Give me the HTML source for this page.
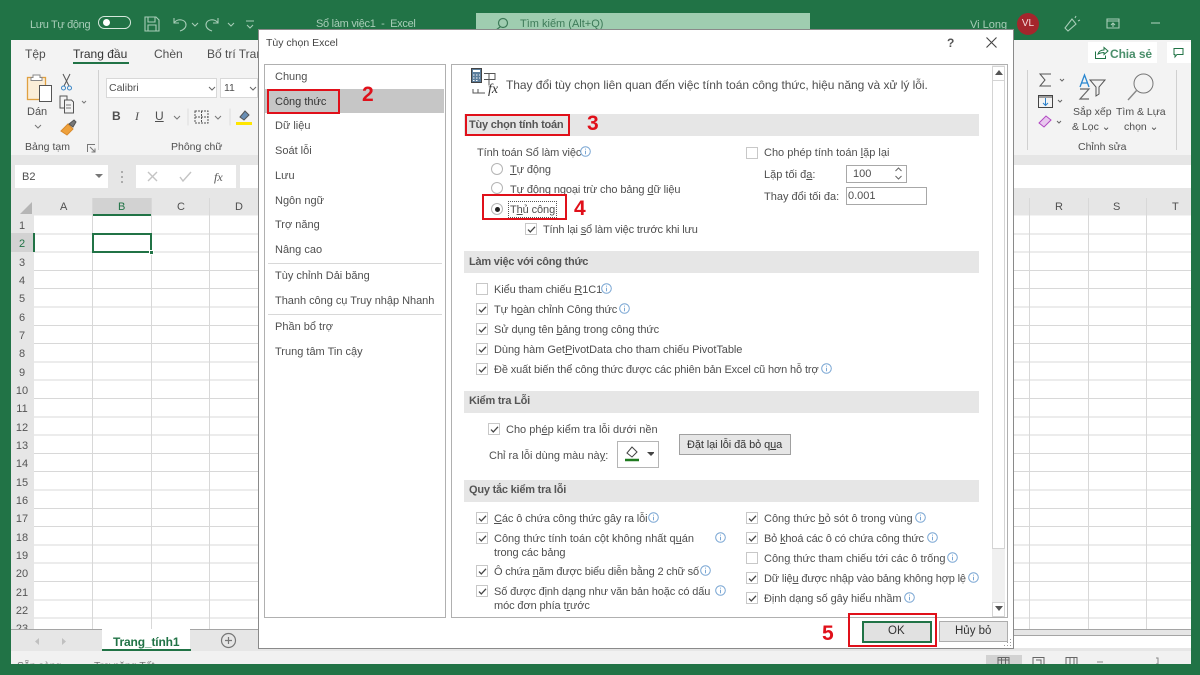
<!DOCTYPE html>
<html lang="vi"><head><meta charset="utf-8"><title>Tùy chọn Excel</title>
<style>
html,body{margin:0;padding:0;width:1200px;height:675px;overflow:hidden;background:#217346}
body{position:relative;font-family:"Liberation Sans","Noto Sans CJK SC",sans-serif;font-size:11px;color:#4f4f4f;filter:blur(.3px)}
div,span.t,svg.a{position:absolute}
.t{position:absolute;white-space:nowrap;line-height:14px;height:14px;margin-top:1px;letter-spacing:-.1px}
.n{font-size:11px;text-align:center;width:24px;left:10px;color:#555;margin-top:2px;letter-spacing:0}
.h{font-weight:bold;color:#555;left:469px;letter-spacing:-.22px}
.z{letter-spacing:0}
.sec{position:absolute;left:464px;width:515px;height:22px;background:#e6e6e6}
.cb{position:absolute;width:10px;height:10px;border:1px solid #c8c8c8;background:#fff}
.cb svg{position:absolute;left:.5px;top:.5px;width:9px;height:9px}
.info{position:absolute;width:11px;height:11px}
.rb{position:absolute;border:2px solid #e0101a}
.num{position:absolute;color:#e0101a;font-weight:bold;font-size:21px;line-height:24px}
.ra{position:absolute;width:10px;height:10px;border:1px solid #b5b5b5;border-radius:50%;background:#fff}
.sep{position:absolute;background:#d0d0d0}
u{text-underline-offset:1px}
</style></head><body>
<svg width="0" height="0" style="position:absolute"><defs>
<symbol id="ic" viewBox="0 0 11 11"><circle cx="5.5" cy="5.5" r="4.8" fill="none" stroke="#7ba7d4"/><path d="M5.5 2.600v1M5.500 4.800v3.400" stroke="#7ba7d4" fill="none"/></symbol>
<symbol id="ck" viewBox="0 0 9 9"><path d="M1 4.600l2.300 2.300L8 1.800" fill="none" stroke="#444" stroke-width="1.300"/></symbol>
</defs></svg>

<!-- title bar -->
<span class="t" style="left:30px;top:17px;color:#a8cdb8;letter-spacing:-.35px">Lưu Tự động</span>
<div style="left:98px;top:16px;width:31px;height:11px;border:1.5px solid #d5e8dc;border-radius:8px"></div>
<div style="left:103px;top:19px;width:7px;height:7px;border-radius:50%;background:#fff"></div>
<svg class="a" style="left:143px;top:15px" width="120" height="18" fill="none" stroke="#a8cdb8" stroke-width="1.100">
<path d="M2 2h11l3 3v11H2zM5 2v5h7V2M5 16v-6h8v6"/>
<path d="M31 3v5h5M31 8c3-5 12-4 12 2 0 3-3 5-6 6"/><path d="M49 8l3 3 3-3"/>
<path d="M75 3v5h-5M75 8c-3-5-12-4-12 2 0 3 3 5 6 6"/><path d="M85 8l3 3 3-3"/>
<path d="M103 6h8M104 10l3 3 3-3"/>
</svg>
<span class="t" style="left:316px;top:16px;color:#a8cdb8;letter-spacing:-.28px">Sổ làm việc1 &nbsp;-&nbsp; Excel</span>
<div style="left:476px;top:13px;width:334px;height:16px;background:#9fcdb0"></div>
<svg class="a" style="left:495px;top:17px" width="14" height="12" fill="none" stroke="#3d7a58" stroke-width="1.200"><circle cx="8" cy="6" r="4.500"/><path d="M5 10l-4 3"/></svg>
<span class="t z" style="left:520px;top:16px;color:#3d7a58">Tìm kiếm (Alt+Q)</span>
<span class="t z" style="left:970px;top:17px;color:#a8cdb8">Vi Long</span>
<div style="left:1017px;top:13px;width:22px;height:22px;border-radius:50%;background:#a4262c;color:#f5dcdc;font-size:10px;line-height:22px;text-align:center">VL</div>
<svg class="a" style="left:1063px;top:15px" width="135" height="18" fill="none" stroke="#a8cdb8" stroke-width="1.100"><path d="M2 13L9 4l4 5-8 7zM12 3l1-2M15 6l2-1"/><path d="M44 4h12v9H44zM44 6h12M50 12V8M48 10l2-2 2 2"/><path d="M88 8h9"/></svg>

<!-- Window -->
<div style="left:11px;top:40px;width:1180px;height:624px;background:#f3f3f3"></div>
<span class="t z" style="left:25px;top:46px;font-size:12px">Tệp</span>
<span class="t z" style="left:73px;top:46px;font-size:12px;color:#333">Trang đầu</span>
<div style="left:73px;top:62px;width:56px;height:2px;background:#217346"></div>
<span class="t z" style="left:154px;top:46px;font-size:12px">Chèn</span>
<span class="t z" style="left:207px;top:46px;font-size:12px">Bố trí Trang</span>

<!-- ribbon left -->
<svg class="a" style="left:24px;top:72px" width="32" height="32" fill="none"><rect x="3.500" y="5.500" width="18" height="22" fill="#fbeed8" stroke="#e0a040" stroke-width="1.300"/><path d="M9 5.500V3h7v2.500h2v3H7v-3z" fill="#fff" stroke="#888"/><rect x="15.500" y="13.500" width="12" height="16" fill="#fff" stroke="#555"/></svg>
<span class="t z" style="left:27px;top:104px">Dán</span>
<svg class="a" style="left:33px;top:123px" width="10" height="7" fill="none" stroke="#777"><path d="M2 2l3 3 3-3"/></svg>
<svg class="a" style="left:59px;top:72px" width="30" height="66" fill="none" stroke="#555"><path d="M4 2l6 12M11 2L5 14"/><circle cx="4.500" cy="16" r="2" stroke="#3a87c8"/><circle cx="10.500" cy="16" r="2" stroke="#3a87c8"/><path d="M1 24h7v12H1z"/><path d="M5.500 28h7l2 2v11h-9z" fill="#f3f3f3"/><path d="M7 33h5M7 36h5" stroke="#777"/><path d="M23 29l2 2 2-2" stroke="#777"/><path d="M2 59l7-7 5 5-6 6z" fill="#eea13c" stroke="#d98a2c"/><path d="M10 52l5-4 2 2-3 5z" fill="#777"/></svg>
<div class="sep" style="left:98px;top:70px;width:1px;height:80px"></div>
<span class="t z" style="left:25px;top:139px;font-size:10.500px">Bảng tạm</span>
<svg class="a" style="left:87px;top:144px" width="9" height="9" fill="none" stroke="#777"><path d="M.5 8V.5H8M3 3l5 5M8 4.500V8H4.500"/></svg>
<div style="left:106px;top:78px;width:111px;height:20px;background:#fff;border:1px solid #d8d8d8;box-sizing:border-box"></div>
<div style="left:220px;top:78px;width:38px;height:20px;background:#fff;border:1px solid #d8d8d8;box-sizing:border-box"></div>
<span class="t z" style="left:109px;top:80px;font-size:10.500px">Calibri</span>
<span class="t z" style="left:224px;top:80px;font-size:10.500px">11</span>
<svg class="a" style="left:208px;top:85px" width="50" height="8" fill="none" stroke="#666"><path d="M1 2l3 3 3-3M42 2l3 3 3-3"/></svg>
<span class="t z" style="left:112px;top:108px;font-weight:bold;font-size:12px">B</span>
<span class="t z" style="left:135px;top:108px;font-style:italic;font-size:12px;font-family:'Liberation Serif',serif">I</span>
<span class="t z" style="left:155px;top:108px;font-size:12px;text-decoration:underline">U</span>
<svg class="a" style="left:172px;top:108px" width="90" height="18" fill="none" stroke="#777"><path d="M2 8l3 3 3-3M43 8l3 3 3-3"/><path d="M16 .5v17" stroke="#ddd"/><path d="M23 3h13v12H23zM29.500 3v12M23 9h13" stroke-dasharray="2 1" stroke="#555"/><path d="M58 .5v17" stroke="#ddd"/><path d="M68 9l5-6 4 4-5 5z" fill="#6a8fb5" stroke="#555"/></svg>
<div style="left:236px;top:122px;width:16px;height:3px;background:#ffe600"></div>
<span class="t z" style="left:171px;top:139px;font-size:10.500px">Phông chữ</span>

<!-- ribbon right -->
<div style="left:1088px;top:42px;width:69px;height:21px;background:#fff"></div>
<svg class="a" style="left:1094px;top:46px" width="15" height="14" fill="none" stroke="#217346"><path d="M1.500 5.500v7h10v-3M4 8c1-3 3-4 6-4V1.500L14 5l-4 3.500V6.500C8 6.500 6 7 4 8z"/></svg>
<span class="t z" style="left:1110px;top:46px;font-size:12px;font-weight:bold;color:#4a8f6b;letter-spacing:-.1px">Chia sẻ</span>
<div style="left:1167px;top:42px;width:24px;height:21px;background:#fff"></div>
<svg class="a" style="left:1173px;top:47px" width="12" height="12" fill="none" stroke="#217346"><path d="M1 1.500h9v6H4L2 10V7.500H1z"/></svg>
<div class="sep" style="left:1027px;top:70px;width:1px;height:80px"></div>
<div class="sep" style="left:1176px;top:70px;width:1px;height:80px"></div>
<svg class="a" style="left:1030px;top:70px" width="140" height="66" fill="none" stroke="#666">
<path d="M21 4H10l5 6-5 6h11" stroke="#555"/><path d="M30 9l2 2 2-2M28 30l2 2 2-2M27 51l2 2 2-2"/>
<path d="M8.500 25.500h14v12h-14zM9 27h13" stroke="#444"/><path d="M15.500 28v7M13 33l2.500 2.500 2.500-2.500" stroke="#2a7fc9"/>
<path d="M9 53l7-7 5 4-7 7z" fill="#e8c8ee" stroke="#b146c2"/>
<path d="M50 17l4.500-12 4.500 12M51.500 13h6" stroke="#2a87d0" stroke-width="1.300"/><path d="M50 19h9l-9 10h9" stroke-width="1.200"/><path d="M60 10h15l-6 7v7l-3 2v-9z" stroke="#555"/>
<circle cx="113.500" cy="13.500" r="9.500" stroke="#777"/><path d="M107 20l-9 10" stroke="#888" stroke-width="1.400"/>
</svg>
<span class="t z" style="left:1073px;top:104px;font-size:10.500px">Sắp xếp</span>
<span class="t z" style="left:1072px;top:119px;font-size:10.500px">&amp; Lọc ⌄</span>
<span class="t z" style="left:1116px;top:104px;font-size:10.500px">Tìm &amp; Lựa</span>
<span class="t z" style="left:1124px;top:119px;font-size:10.500px">chọn ⌄</span>
<span class="t z" style="left:1078px;top:139px;font-size:10.500px">Chỉnh sửa</span>

<!-- formula bar -->
<div style="left:11px;top:155px;width:1180px;height:43px;background:#e6e6e6"></div>
<div style="left:15px;top:165px;width:93px;height:23px;background:#fff"></div>
<span class="t z" style="left:22px;top:169px;font-size:11px">B2</span>
<svg class="a" style="left:95px;top:174px" width="9" height="6"><path d="M0 0h8L4 4z" fill="#777"/></svg>
<svg class="a" style="left:121px;top:171px" width="3" height="12"><path d="M1 0v2M1 5v2M1 10v2" stroke="#999" stroke-width="1.500"/></svg>
<div style="left:136px;top:165px;width:100px;height:23px;background:#fff"></div>
<div style="left:240px;top:165px;width:20px;height:23px;background:#fff"></div>
<div style="left:1013px;top:165px;width:178px;height:23px;background:#fff"></div>
<svg class="a" style="left:146px;top:171px" width="50" height="12" fill="none" stroke="#c4c4c4" stroke-width="1.400"><path d="M2 1l9 9M11 1l-9 9M34 6l3 4 8-9"/></svg>
<span class="t z" style="left:214px;top:169px;font-style:italic;font-family:'Liberation Serif',serif;font-size:12px;color:#555">fx</span>

<!-- grid -->
<div style="left:34px;top:216px;width:1157px;height:413px;background-color:#fff;background-image:repeating-linear-gradient(to bottom,transparent 0,transparent 17.3px,#d8d8d8 17.3px,#d8d8d8 18.3px)"></div>
<div style="left:11px;top:198px;width:1180px;height:17px;background:#e6e6e6"></div>
<div style="left:92px;top:198px;width:60px;height:17px;background:#d2d2d2"></div>
<div style="left:92px;top:214px;width:60px;height:2px;background:#217346"></div>
<div style="left:11px;top:215px;width:23px;height:414px;background:#e6e6e6"></div>
<div style="left:11px;top:233px;width:23px;height:19px;background:#d2d2d2"></div>
<div style="left:33px;top:233px;width:2px;height:19px;background:#217346"></div>
<svg class="a" style="left:20px;top:202px" width="12" height="12"><path d="M12 0v12H0z" fill="#b5b5b5"/></svg>
<div class="sep" style="left:92px;top:198px;width:1px;height:431px;background:#d8d8d8"></div>
<div class="sep" style="left:151px;top:198px;width:1px;height:431px;background:#d8d8d8"></div>
<div class="sep" style="left:209px;top:198px;width:1px;height:431px;background:#d8d8d8"></div>
<div class="sep" style="left:1029px;top:198px;width:1px;height:431px;background:#d8d8d8"></div>
<div class="sep" style="left:1088px;top:198px;width:1px;height:431px;background:#d8d8d8"></div>
<div class="sep" style="left:1146px;top:198px;width:1px;height:431px;background:#d8d8d8"></div>
<span class="t z" style="left:60px;top:199px">A</span><span class="t z" style="left:118px;top:199px;color:#217346">B</span><span class="t z" style="left:177px;top:199px">C</span><span class="t z" style="left:235px;top:199px">D</span>
<span class="t z" style="left:1055px;top:199px">R</span><span class="t z" style="left:1113px;top:199px">S</span><span class="t z" style="left:1172px;top:199px">T</span>
<div style="left:92px;top:233px;width:56px;height:16px;border:2px solid #217346;background:#fff"></div>
<div style="left:149px;top:250px;width:3px;height:3px;background:#217346;border:1px solid #fff"></div>
<span class="t n" style="top:217px">1</span><span class="t n" style="top:235px;color:#217346">2</span><span class="t n" style="top:254px">3</span><span class="t n" style="top:272px">4</span><span class="t n" style="top:290px">5</span><span class="t n" style="top:309px">6</span><span class="t n" style="top:327px">7</span><span class="t n" style="top:345px">8</span><span class="t n" style="top:364px">9</span><span class="t n" style="top:382px">10</span><span class="t n" style="top:400px">11</span><span class="t n" style="top:419px">12</span><span class="t n" style="top:437px">13</span><span class="t n" style="top:455px">14</span><span class="t n" style="top:474px">15</span><span class="t n" style="top:492px">16</span><span class="t n" style="top:510px">17</span><span class="t n" style="top:529px">18</span><span class="t n" style="top:547px">19</span><span class="t n" style="top:565px">20</span><span class="t n" style="top:584px">21</span><span class="t n" style="top:602px">22</span><span class="t n" style="top:620px;height:9px;overflow:hidden">23</span>

<!-- tab bar / status -->
<div style="left:11px;top:629px;width:1180px;height:35px;background:#e6e6e6"></div>
<div style="left:11px;top:629px;width:1180px;height:1px;background:#a5a5a5"></div>
<div style="left:1013px;top:635px;width:178px;height:1px;background:#a5a5a5"></div>
<div style="left:1013px;top:636px;width:178px;height:12px;background:#fff"></div>
<div style="left:11px;top:651px;width:1180px;height:13px;background:#f1f1f1"></div>
<div style="left:102px;top:629px;width:88px;height:20px;background:#fff"></div>
<div style="left:102px;top:649px;width:89px;height:2px;background:#217346"></div>
<span class="t" style="left:113px;top:634px;font-weight:bold;font-size:12px;color:#217346;letter-spacing:-.15px">Trang_tính1</span>
<svg class="a" style="left:34px;top:637px" width="34" height="10"><path d="M5 1v7L1 4.500zM28 1v7l4-3.500z" fill="#c0c0c0"/></svg>
<svg class="a" style="left:220px;top:632px" width="17" height="17" fill="none" stroke="#777" stroke-width="1.200"><circle cx="8.500" cy="8.500" r="7"/><path d="M8.500 5v7M5 8.500h7"/></svg>
<span class="t z" style="left:17px;top:658px;font-size:10.500px;color:#777">Sẵn sàng</span>
<span class="t z" style="left:94px;top:658px;font-size:10.500px;color:#777">Trợ năng Tốt</span>
<div style="left:986px;top:655px;width:36px;height:9px;background:#d2d2d2"></div>
<svg class="a" style="left:996px;top:657px" width="170" height="7" fill="none" stroke="#666"><path d="M2 7V.5h11V7M2 3h11M5.500 .5V7M9.500 .5V7M37 7V.5h11V7M40 3h5v4M70 7V.5h11V7M74 .5V7M78 .5V7"/><path d="M101 5h6M160 1h2v6h-2" stroke="#888"/></svg>
<div style="left:0;top:664px;width:1200px;height:11px;background:#217346"></div>

<!-- dialog -->
<div style="left:258px;top:29px;width:754px;height:618px;background:#fff;border:1px solid #8a8a8a"></div>
<span class="t z" style="left:266px;top:35px;font-size:10.500px;color:#444">Tùy chọn Excel</span>
<span class="t z" style="left:947px;top:35px;font-size:12px;font-weight:bold;color:#555">?</span>
<svg class="a" style="left:986px;top:37px" width="11" height="11" fill="none" stroke="#444" stroke-width="1.100"><path d="M.5.500l10 10M10.500.500l-10 10"/></svg>

<!-- list -->
<div style="left:264px;top:64px;width:180px;height:552px;border:1px solid #b0b0b0;background:#fff"></div>
<div style="left:265px;top:89px;width:179px;height:24px;background:#c6c6c6"></div>
<span class="t z" style="left:275px;top:69px">Chung</span>
<span class="t z" style="left:275px;top:94px;color:#333">Công thức</span>
<span class="t z" style="left:275px;top:118px">Dữ liệu</span>
<span class="t z" style="left:275px;top:143px">Soát lỗi</span>
<span class="t z" style="left:275px;top:168px">Lưu</span>
<span class="t z" style="left:275px;top:193px">Ngôn ngữ</span>
<span class="t z" style="left:275px;top:217px">Trợ năng</span>
<span class="t z" style="left:275px;top:242px">Nâng cao</span>
<div class="sep" style="left:268px;top:263px;width:174px;height:1px;background:#d8d8d8"></div>
<span class="t z" style="left:275px;top:268px">Tùy chỉnh Dải băng</span>
<span class="t" style="left:275px;top:293px;letter-spacing:-.03px">Thanh công cụ Truy nhập Nhanh</span>
<div class="sep" style="left:268px;top:314px;width:174px;height:1px;background:#d8d8d8"></div>
<span class="t z" style="left:275px;top:319px">Phần bổ trợ</span>
<span class="t z" style="left:275px;top:344px">Trung tâm Tin cậy</span>

<!-- right panel -->
<div style="left:451px;top:64px;width:555px;height:552px;border:1px solid #b0b0b0;background:#fff"></div>
<div style="left:992px;top:65px;width:13px;height:551px;background:#f0f0f0"></div>
<div style="left:992px;top:66px;width:11px;height:481px;border:1px solid #d4d4d4;background:#fff"></div>
<div style="left:992px;top:66px;width:11px;height:13px;border:1px solid #d4d4d4;background:#fff"></div>
<div style="left:992px;top:602px;width:11px;height:13px;border:1px solid #d4d4d4;background:#fff"></div>
<svg class="a" style="left:994px;top:70px" width="10" height="6"><path d="M5 0l4 5H1z" fill="#555"/></svg>
<svg class="a" style="left:994px;top:606px" width="10" height="6"><path d="M1 0h8L5 5z" fill="#555"/></svg>

<svg class="a" style="left:471px;top:68px" width="30" height="30" fill="none" stroke="#555"><rect x=".5" y=".5" width="10" height="14" fill="#5c7e9c" stroke="#444"/><path d="M2 3h7" stroke="#fff" stroke-width="2"/><path d="M2 7h1.500M5 7h1.500M8 7h1M2 10h1.500M5 10h1.500M8 10h1M2 12.500h1.500M5 12.500h1.500" stroke="#fff"/><path d="M13 5.500h11v6H13M18 5.500v12M2 21v4h12M7 21v4"/></svg>
<span class="t z" style="left:488px;top:82px;font-family:'Liberation Serif',serif;font-style:italic;font-size:14px;color:#333">fx</span>
<span class="t" style="left:506px;top:77px;font-size:12px;letter-spacing:-.04px">Thay đổi tùy chọn liên quan đến việc tính toán công thức, hiệu năng và xử lý lỗi.</span>

<div class="sec" style="top:114px"></div>
<div class="sec" style="top:251px"></div>
<div class="sec" style="top:391px"></div>
<div class="sec" style="top:480px"></div>
<span class="t h" style="top:117px">Tùy chọn tính toán</span>
<span class="t h" style="top:254px">Làm việc với công thức</span>
<span class="t h" style="top:393px">Kiểm tra Lỗi</span>
<span class="t h" style="top:482px">Quy tắc kiểm tra lỗi</span>

<span class="t" style="left:477px;top:145px">Tính toán Sổ làm việc</span>
<svg class="info" style="left:580px;top:146px"><use href="#ic"/></svg>
<div class="ra" style="left:491px;top:163px"></div><div class="ra" style="left:491px;top:182px"></div><div class="ra" style="left:491px;top:203px"></div>
<div style="left:494.500px;top:206.500px;width:5px;height:5px;border-radius:50%;background:#222"></div>
<span class="t" style="left:510px;top:162px"><u>T</u>ự động</span>
<span class="t" style="left:510px;top:182px">Tự động ngoại trừ cho bảng <u>d</u>ữ liệu</span>
<span class="t" style="left:510px;top:202px">T<u>h</u>ủ công</span>
<div style="left:508px;top:201px;width:47px;height:15px;border:1px dotted #555"></div>
<div class="cb" style="left:525px;top:223px"><svg><use href="#ck"/></svg></div>
<span class="t" style="left:543px;top:222px;letter-spacing:-.16px">Tính lại <u>s</u>ổ làm việc trước khi lưu</span>

<div class="cb" style="left:746px;top:147px"></div>
<span class="t z" style="left:764px;top:145px">Cho phép tính toán <u>l</u>ặp lại</span>
<span class="t z" style="left:764px;top:167px">Lặp tối đ<u>a</u>:</span>
<div style="left:846px;top:165px;width:59px;height:16px;border:1px solid #a8a8a8;background:#fff"></div>
<span class="t z" style="left:853px;top:166px;font-size:11px">100</span>
<svg class="a" style="left:894px;top:166px" width="9" height="15" fill="none" stroke="#666"><path d="M1.500 5L4.500 2l3 3M1.500 10l3 3 3-3"/></svg>
<span class="t z" style="left:764px;top:189px">Thay đổi tối đa:</span>
<div style="left:846px;top:187px;width:79px;height:16px;border:1px solid #a8a8a8;background:#fff"></div>
<span class="t z" style="left:848px;top:188px;font-size:11px">0.001</span>

<div class="cb" style="left:476px;top:283px"></div><span class="t" style="left:494px;top:282px">Kiểu tham chiếu <u>R</u>1C1</span><svg class="info" style="left:601px;top:283px"><use href="#ic"/></svg>
<div class="cb" style="left:476px;top:303px"><svg><use href="#ck"/></svg></div><span class="t" style="left:494px;top:302px">Tự h<u>o</u>àn chỉnh Công thức</span><svg class="info" style="left:619px;top:303px"><use href="#ic"/></svg>
<div class="cb" style="left:476px;top:323px"><svg><use href="#ck"/></svg></div><span class="t" style="left:494px;top:322px">Sử dụng tên <u>b</u>ảng trong công thức</span>
<div class="cb" style="left:476px;top:343px"><svg><use href="#ck"/></svg></div><span class="t" style="left:494px;top:342px;letter-spacing:-.05px">Dùng hàm Get<u>P</u>ivotData cho tham chiếu PivotTable</span>
<div class="cb" style="left:476px;top:363px"><svg><use href="#ck"/></svg></div><span class="t" style="left:494px;top:362px;letter-spacing:-.12px">Đề xuất biến thể công thức được các phiên bản Excel cũ hơn hỗ trợ</span><svg class="info" style="left:821px;top:363px"><use href="#ic"/></svg>

<div class="cb" style="left:488px;top:423px"><svg><use href="#ck"/></svg></div><span class="t z" style="left:506px;top:422px">Cho ph<u>é</u>p kiểm tra lỗi dưới nền</span>
<span class="t z" style="left:489px;top:448px">Chỉ ra lỗi dùng màu nà<u>y</u>:</span>
<div style="left:617px;top:441px;width:40px;height:25px;border:1px solid #b5b5b5;background:#fff"></div>
<svg class="a" style="left:624px;top:445px" width="30" height="18" fill="none" stroke="#444"><path d="M3 8l5-6 5 5-5 5z"/><path d="M1 15h14" stroke="#1f7a1f" stroke-width="2.500"/><path d="M23 7h8l-4 4z" fill="#444" stroke="none"/></svg>
<div style="left:679px;top:434px;width:110px;height:19px;border:1px solid #a0a0a0;background:#e6e6e6"></div>
<span class="t" style="left:687px;top:437px;color:#333">Đặt lại lỗi đã bỏ q<u>u</u>a</span>

<div class="cb" style="left:476px;top:512px"><svg><use href="#ck"/></svg></div><span class="t" style="left:494px;top:511px"><u>C</u>ác ô chứa công thức gây ra lỗi</span><svg class="info" style="left:648px;top:512px"><use href="#ic"/></svg>
<div class="cb" style="left:476px;top:532px"><svg><use href="#ck"/></svg></div><span class="t z" style="left:494px;top:531px">Công thức tính toán cột không nhất q<u>u</u>án</span><svg class="info" style="left:715px;top:532px"><use href="#ic"/></svg>
<span class="t" style="left:494px;top:545px">trong các bảng</span>
<div class="cb" style="left:476px;top:565px"><svg><use href="#ck"/></svg></div><span class="t" style="left:494px;top:564px;letter-spacing:-.17px">Ô chứa <u>n</u>ăm được biểu diễn bằng 2 chữ số</span><svg class="info" style="left:700px;top:565px"><use href="#ic"/></svg>
<div class="cb" style="left:476px;top:585px"><svg><use href="#ck"/></svg></div><span class="t" style="left:494px;top:584px;letter-spacing:-.14px">Số được định dạng như văn bản hoặc có dấu</span><svg class="info" style="left:715px;top:585px"><use href="#ic"/></svg>
<span class="t" style="left:494px;top:598px">móc đơn phía t<u>r</u>ước</span>

<div class="cb" style="left:746px;top:512px"><svg><use href="#ck"/></svg></div><span class="t z" style="left:764px;top:511px">Công thức <u>b</u>ỏ sót ô trong vùng</span><svg class="info" style="left:915px;top:512px"><use href="#ic"/></svg>
<div class="cb" style="left:746px;top:532px"><svg><use href="#ck"/></svg></div><span class="t" style="left:764px;top:531px;letter-spacing:-.15px">Bỏ <u>k</u>hoá các ô có chứa công thức</span><svg class="info" style="left:927px;top:532px"><use href="#ic"/></svg>
<div class="cb" style="left:746px;top:552px"></div><span class="t z" style="left:764px;top:551px">Côn<u>g</u> thức tham chiếu tới các ô trống</span><svg class="info" style="left:947px;top:552px"><use href="#ic"/></svg>
<div class="cb" style="left:746px;top:572px"><svg><use href="#ck"/></svg></div><span class="t" style="left:764px;top:571px;letter-spacing:-.15px">Dữ liệ<u>u</u> được nhập vào bảng không hợp lệ</span><svg class="info" style="left:968px;top:572px"><use href="#ic"/></svg>
<div class="cb" style="left:746px;top:592px"><svg><use href="#ck"/></svg></div><span class="t" style="left:764px;top:591px">Định dạng số gây hiểu nhầm</span><svg class="info" style="left:904px;top:592px"><use href="#ic"/></svg>

<!-- buttons -->
<div style="left:862px;top:621px;width:66px;height:18px;border:2px solid #217346;background:#e1e1e1"></div>
<span class="t z" style="left:888px;top:623px;font-size:11.500px;color:#333">OK</span>
<div style="left:939px;top:621px;width:67px;height:19px;border:1px solid #adadad;background:#e6e6e6"></div>
<span class="t z" style="left:955px;top:623px;font-size:11.500px;color:#333">Hủy bỏ</span>
<svg class="a" style="left:1004px;top:638px" width="8" height="9"><path d="M6 1h1v1H6zM6 4h1v1H6zM3 4h1v1H3zM6 7h1v1H6zM3 7h1v1H3zM0 7h1v1H0z" fill="#999"/></svg>

<!-- red annotations -->
<div class="rb" style="left:267px;top:89px;width:69px;height:21px"></div>
<div class="rb" style="left:465px;top:114px;width:101px;height:18px"></div>
<div class="rb" style="left:482px;top:194px;width:81px;height:22px"></div>
<div class="rb" style="left:848px;top:613px;width:85px;height:30px"></div>
<div class="num" style="left:362px;top:83px">2</div>
<div class="num" style="left:587px;top:112px">3</div>
<div class="num" style="left:574px;top:197px">4</div>
<div class="num" style="left:822px;top:622px">5</div>
</body></html>
